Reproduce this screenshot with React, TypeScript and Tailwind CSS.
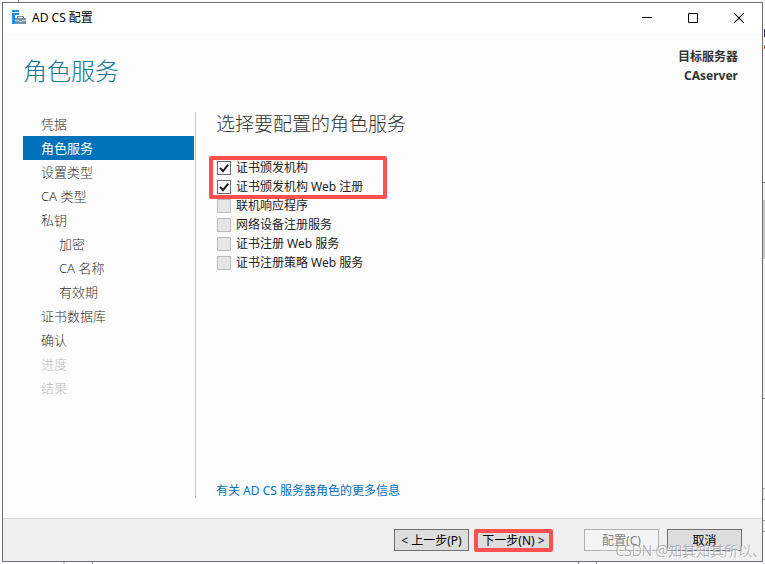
import { useState } from "react";

const steps = [
  { label: "凭据" },
  { label: "角色服务", active: true },
  { label: "设置类型" },
  { label: "CA 类型" },
  { label: "私钥" },
  { label: "加密", nested: true },
  { label: "CA 名称", nested: true },
  { label: "有效期", nested: true },
  { label: "证书数据库" },
  { label: "确认" },
  { label: "进度", disabled: true },
  { label: "结果", disabled: true },
];

const initialRoles = [
  { id: "ca", label: "证书颁发机构", checked: true },
  { id: "ca-web", label: "证书颁发机构 Web 注册", checked: true },
  { id: "ocsp", label: "联机响应程序", checked: false },
  { id: "ndes", label: "网络设备注册服务", checked: false },
  { id: "ces", label: "证书注册 Web 服务", checked: false },
  { id: "cep", label: "证书注册策略 Web 服务", checked: false },
];

function ServerIcon() {
  return (
    <svg width="16" height="16" viewBox="0 0 16 16" shapeRendering="crispEdges" aria-hidden>
      <path fill="#1a8fe3" d="M1 0h7v2H1zM1 3h7v2H4v9H1z" />
      <path fill="#7396aa" d="M6 6h7v2h2v6H4V8h2z" />
      <path fill="#fff" d="M7 7h5v1H7z" />
      <path fill="#c9d6de" d="M4 10h4v1H4zM11 10h4v1h-4zM8 11h3v1H8z" />
    </svg>
  );
}

// edges of the window behind the dialog
function Backdrop() {
  return (
    <div aria-hidden>
      <div className="absolute top-0 left-[18px] h-[2px] w-px bg-[#888]" />
      <div className="absolute top-[29px] right-0 h-2 w-px bg-[#3a2a50]" />
      <div className="absolute top-[45px] right-0 h-1 w-px bg-[#b06040]" />
      <div className="absolute top-[182px] right-0 h-[217px] w-[2px] border-y border-[#888] bg-[#f0f0f0]" />
      <div className="absolute top-[200px] right-0 h-[59px] w-[2px] bg-[#c8c8c8]" />
      <div className="absolute top-[488px] right-0 h-[12px] w-[2px] border-y border-[#aaa] bg-[#eee]" />
      <div className="absolute top-[520px] right-0 h-[12px] w-[2px] border-y border-[#999] bg-[#f4f4f4]" />
      <div className="absolute bottom-0 left-[63px] h-[2px] w-[2px] bg-[#ccc]" />
      <div className="absolute bottom-0 left-[92px] h-[2px] w-px bg-[#888]" />
      <div className="absolute bottom-0 left-[578px] h-[2px] w-[19px] border-x border-[#888]" />
    </div>
  );
}

function TitleBar() {
  return (
    <header className="flex h-[30px] shrink-0 items-center bg-white pl-2">
      <ServerIcon />
      <span className="ml-[5px] flex-1 text-[12px] text-black">AD CS 配置</span>
      <button aria-label="Minimize" className="flex h-full w-[46px] items-center justify-center">
        <svg width="10" height="10" viewBox="0 0 10 10" shapeRendering="crispEdges">
          <path d="M0 4.5h10" stroke="#000" />
        </svg>
      </button>
      <button aria-label="Maximize" className="flex h-full w-[46px] items-center justify-center">
        <svg width="10" height="10" viewBox="0 0 10 10">
          <path d="M.5.5h9v9h-9z" fill="none" stroke="#000" />
        </svg>
      </button>
      <button aria-label="Close" className="flex h-full w-[46px] items-center justify-center">
        <svg width="10" height="10" viewBox="0 0 10 10">
          <path d="M0 0l10 10M10 0L0 10" stroke="#000" strokeWidth="1.1" />
        </svg>
      </button>
    </header>
  );
}

export default function App() {
  const [roles, setRoles] = useState(initialRoles);

  const toggle = (id: string) =>
    setRoles((list) => list.map((r) => (r.id === id ? { ...r, checked: !r.checked } : r)));

  return (
    <div className="relative flex h-screen overflow-hidden bg-[#fbfafc] p-[2px] font-['Noto_Sans','Noto_Sans_CJK_SC',sans-serif]">
      <Backdrop />
      <div className="relative flex min-w-0 flex-1 flex-col border border-[#6d6d6d] bg-[#fcfcfc]">
        <TitleBar />

        <div className="flex shrink-0 justify-between pt-[14px] pr-6 pl-5">
          <h1 className="pt-1.5 text-[24px] leading-[36px] font-light text-[#0f7599]">角色服务</h1>
          <div className="text-right text-[12px] leading-[19px] font-bold text-[#333]">
            <p>目标服务器</p>
            <p>CAserver</p>
          </div>
        </div>

        <div className="flex flex-1 pt-[23px] pb-5 pl-5">
          <nav className="w-[173px] shrink-0 border-r border-[#c8c8c8] pr-px" aria-label="步骤">
            {steps.map((step) => (
              <a
                key={step.label}
                href="#"
                aria-current={step.active ? "step" : undefined}
                className={`block h-6 text-[13px] leading-6 ${step.nested ? "pl-9" : "pl-[18px]"} ${
                  step.active
                    ? "bg-[#0072bc] text-white"
                    : step.disabled
                      ? "font-light text-[#bfbfbf]"
                      : "font-light text-[#333]"
                }`}
              >
                {step.label}
              </a>
            ))}
          </nav>

          <main className="flex flex-1 flex-col pl-5">
            <h2 className="text-[19px] leading-6 font-light text-[#333]">选择要配置的角色服务</h2>
            <div className="relative mt-[22px] pl-px">
              {roles.map((role) => (
                <label key={role.id} className="flex h-[19px] items-center gap-[5px] text-[12px] text-[#222]">
                  <span className="relative h-[14px] w-[14px]">
                    <input
                      type="checkbox"
                      checked={role.checked}
                      onChange={() => toggle(role.id)}
                      className="peer block h-[14px] w-[14px] appearance-none border border-[#bcbcbc] bg-[#e6e6e6] checked:border-[#707070] checked:bg-white"
                    />
                    <svg
                      viewBox="0 0 14 14"
                      className="pointer-events-none absolute inset-0 hidden peer-checked:block"
                      aria-hidden
                    >
                      <path d="M3 6.8l3 3.4L11.2 3.6" fill="none" stroke="#222" strokeWidth="2" />
                    </svg>
                  </span>
                  {role.label}
                </label>
              ))}
              <div className="pointer-events-none absolute -top-[2px] -left-[7px] h-[43px] w-[178px] rounded-xs border-4 border-[#ff5050]" />
            </div>
            <a href="#" className="mt-auto self-start text-[12px] leading-[14px] text-[#0072bc]">
              有关 AD CS 服务器角色的更多信息
            </a>
          </main>
        </div>

        <footer className="flex h-[43px] shrink-0 items-start justify-end border-t border-[#d9d9d9] bg-[#efefef] pt-[10px] pr-5 text-[12px] text-black">
          <button className="h-[22px] w-[75px] border border-[#707070] bg-[#dddddd] pt-px leading-5 whitespace-nowrap">
            &lt; 上一步(P)
          </button>
          <button className="ml-[5px] h-[23px] w-[79px] rounded-xs border-4 border-[#ff5050] bg-[#dddddd] leading-4 whitespace-nowrap">
            下一步(N) &gt;
          </button>
          <button
            disabled
            className="ml-[31px] h-[22px] w-[75px] border border-[#adb2b5] bg-[#f4f4f4] pt-px leading-5 text-[#838383]"
          >
            配置(C)
          </button>
          <button className="ml-2 h-[22px] w-[75px] border border-[#707070] bg-[#dddddd] pt-px leading-5">取消</button>
        </footer>

        <p className="pointer-events-none absolute -right-1 -bottom-1 text-[14px] leading-7 font-light text-[#a0a0a0] [text-shadow:1px_1px_0_#fff]">
          CSDN @知其知其所以、
        </p>
      </div>
    </div>
  );
}
